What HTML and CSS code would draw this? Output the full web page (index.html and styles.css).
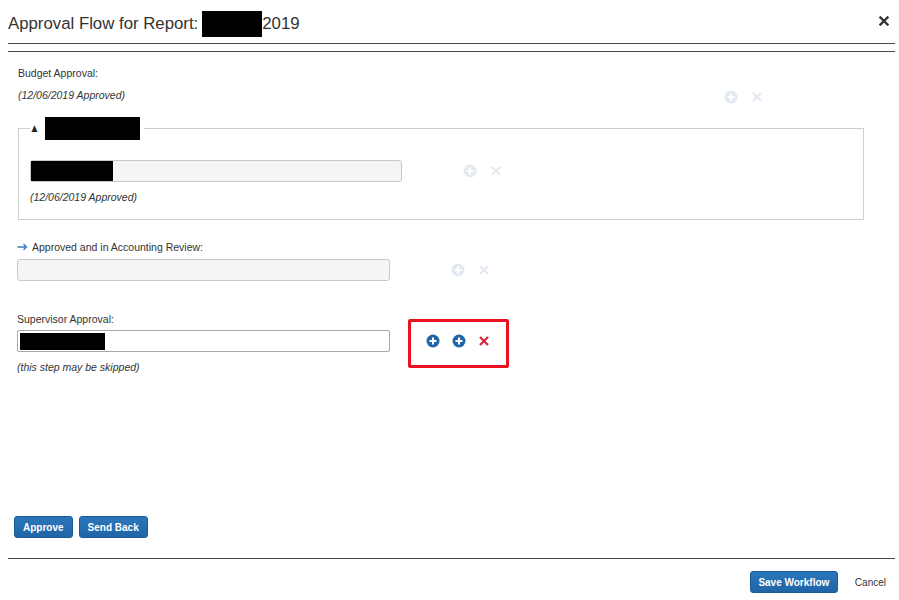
FILE: index.html
```html
<!DOCTYPE html>
<html>
<head>
<meta charset="utf-8">
<link rel="stylesheet" href="styles.css">
</head>
<body>
<div class="modal">
  <div class="header">
    <h1 class="title">Approval Flow for Report: <span class="redact redact-title"></span>2019</h1>
    <span class="close"><svg width="10" height="10" viewBox="0 0 10 10"><path d="M1.5 1.5 L8.5 8.5 M8.5 1.5 L1.5 8.5" stroke="#333" stroke-width="2.4" stroke-linecap="square"/></svg></span>
  </div>
  <div class="divider"></div>

  <div class="content">
    <div class="step step-budget">
      <div class="step-main budget-main">
        <div class="label">Budget Approval:</div>
        <div class="note">(12/06/2019 Approved)</div>
      </div>
      <div class="actions faded">
        <svg class="ic" width="14" height="14" viewBox="0 0 14 14"><circle cx="7" cy="7" r="6.5" fill="currentColor"/><path d="M3.5 7 H10.5 M7 3.5 V10.5" stroke="#fff" stroke-width="2"/></svg>
        <svg class="ic" width="12" height="12" viewBox="0 0 12 12"><path d="M2 2 L10 10 M10 2 L2 10" stroke="currentColor" stroke-width="2.2"/></svg>
      </div>
    </div>

    <fieldset class="group">
      <legend class="group-legend"><span class="tri">&#9650;</span><span class="redact redact-legend"></span></legend>
      <div class="step">
        <div class="step-main">
          <div class="field field-grey"><span class="redact redact-field"></span></div>
        </div>
        <div class="actions faded inner-actions">
          <svg class="ic" width="14" height="14" viewBox="0 0 14 14"><circle cx="7" cy="7" r="6.5" fill="currentColor"/><path d="M3.5 7 H10.5 M7 3.5 V10.5" stroke="#fff" stroke-width="2"/></svg>
          <svg class="ic" width="12" height="12" viewBox="0 0 12 12"><path d="M2 2 L10 10 M10 2 L2 10" stroke="currentColor" stroke-width="2.2"/></svg>
        </div>
      </div>
      <div class="note note-after">(12/06/2019 Approved)</div>
    </fieldset>

    <div class="label label-arrow"><svg class="arrow" width="11" height="8" viewBox="0 0 11 8"><path d="M0.5 4 H9.5 M6.5 1 L9.5 4 L6.5 7" fill="none" stroke="#3a7ac0" stroke-width="1.3"/></svg>Approved and in Accounting Review:</div>
    <div class="step">
      <div class="step-main">
        <div class="field field-grey field-wide"></div>
      </div>
      <div class="actions faded inner-actions">
        <svg class="ic" width="14" height="14" viewBox="0 0 14 14"><circle cx="7" cy="7" r="6.5" fill="currentColor"/><path d="M3.5 7 H10.5 M7 3.5 V10.5" stroke="#fff" stroke-width="2"/></svg>
        <svg class="ic" width="12" height="12" viewBox="0 0 12 12"><path d="M2 2 L10 10 M10 2 L2 10" stroke="currentColor" stroke-width="2.2"/></svg>
      </div>
    </div>

    <div class="step step-super">
      <div class="step-main">
        <div class="label">Supervisor Approval:</div>
        <div class="field field-white field-wide"><span class="redact redact-super"></span></div>
        <div class="note note-after">(this step may be skipped)</div>
      </div>
      <div class="actions highlight">
        <svg class="ic blue" width="14" height="14" viewBox="0 0 14 14"><circle cx="7" cy="7" r="6.5" fill="currentColor"/><path d="M3.5 7 H10.5 M7 3.5 V10.5" stroke="#fff" stroke-width="2"/></svg>
        <svg class="ic blue" width="14" height="14" viewBox="0 0 14 14"><circle cx="7" cy="7" r="6.5" fill="currentColor"/><path d="M3.5 7 H10.5 M7 3.5 V10.5" stroke="#fff" stroke-width="2"/></svg>
        <svg class="ic red" width="12" height="12" viewBox="0 0 12 12"><path d="M2 2 L10 10 M10 2 L2 10" stroke="currentColor" stroke-width="2.2"/></svg>
      </div>
    </div>
  </div>

  <div class="btn-row">
    <button class="btn">Approve</button>
    <button class="btn">Send Back</button>
  </div>

  <div class="footer">
    <button class="btn btn-save">Save Workflow</button>
    <span class="cancel">Cancel</span>
  </div>
</div>
</body>
</html>
```

FILE: styles.css
```css
html, body {
  margin: 0;
  padding: 0;
  background: #fff;
}
body {
  font-family: "Liberation Sans", Arial, sans-serif;
  color: #333;
  width: 899px;
  height: 600px;
  overflow: hidden;
}
.modal {
  display: flex;
  flex-direction: column;
}
.header {
  margin: 0 4px 0 8px;
  padding-top: 11px;
  height: 32px;
  border-bottom: 1px solid #4a4a4a;
  display: flex;
  justify-content: space-between;
  align-items: flex-start;
}
.title {
  margin: 0;
  font-weight: normal;
  font-size: 16.8px;
  line-height: 26px;
  color: #333;
  display: flex;
  align-items: center;
}
.redact {
  display: inline-block;
  background: #000;
}
.redact-title {
  width: 60px;
  height: 26px;
  margin-left: 4px;
}
.close {
  display: flex;
  margin-top: 5px;
  margin-right: 6px;
}
.divider {
  margin: 7px 4px 0 8px;
  border-top: 1px solid #4a4a4a;
}
.content {
  padding-left: 17px;
  display: flex;
  flex-direction: column;
}
.label {
  font-size: 10.5px;
  line-height: 14px;
  color: #333;
}
.note {
  font-size: 10.5px;
  line-height: 14px;
  font-style: italic;
  color: #333;
}
.step {
  display: flex;
  align-items: center;
}
.step-budget {
  margin-top: 14px;
  align-items: flex-end;
}
.budget-main {
  width: 707px;
  padding-left: 1px;
  box-sizing: border-box;
}
.step-budget .note {
  margin-top: 8px;
}
.step-budget .actions {
  margin-bottom: -2px;
}
.actions {
  display: flex;
  align-items: center;
  gap: 13px;
}
.faded {
  color: #e2e9f1;
}
.ic {
  display: block;
}
.blue { color: #1f66a8; }
.red { color: #d3263a; }

.group {
  margin: 15px 0 0 1px;
  width: 846px;
  box-sizing: border-box;
  border: 1px solid #cfcfcf;
  padding: 20px 11px 15px;
  min-width: 0;
}
.group-legend {
  padding: 0 4px 0 1px;
  margin-left: 0;
  display: flex;
  align-items: center;
}
.tri {
  font-size: 9px;
  color: #222;
  margin-right: 7px;
  line-height: 1;
  font-family: "DejaVu Sans", sans-serif;
  transform: scaleX(0.85);
}
.redact-legend {
  width: 95px;
  height: 23px;
}
.field {
  box-sizing: border-box;
  height: 22px;
  border: 1px solid #c8c8c8;
  border-radius: 3px;
  display: flex;
  align-items: center;
}
.field-grey {
  background: #f5f5f5;
  width: 372px;
}
.redact-field {
  width: 82px;
  height: 20px;
}
.inner-actions {
  margin-left: 61px;
}
.note-after {
  margin-top: 8px;
}
.field-wide {
  width: 373px;
}
.label-arrow {
  margin-top: 20px;
  margin-bottom: 5px;
  display: flex;
  align-items: center;
}
.arrow {
  display: block;
  margin-right: 4px;
}
.step-super {
  margin-top: 31px;
}
.step-super .label {
  margin-bottom: 4px;
}
.field-white {
  background: #fff;
  border-color: #a9a9a9;
  border-radius: 2px;
  padding-left: 2px;
}
.redact-super {
  width: 85px;
  height: 17px;
}
.highlight {
  margin-left: 18px;
  width: 101px;
  height: 49px;
  box-sizing: border-box;
  border: 3px solid #e8131f;
  border-radius: 2px;
  padding: 0 0 5px 15px;
  gap: 12px;
}
.btn-row {
  margin-top: 142px;
  padding-left: 14px;
  display: flex;
  gap: 6px;
}
.btn {
  font-family: "Liberation Sans", Arial, sans-serif;
  font-size: 10px;
  font-weight: bold;
  color: #fff;
  height: 22px;
  padding: 0 8px;
  border: 1px solid #1b5b98;
  border-radius: 3px;
  background: linear-gradient(#2b76ba, #1f65a6);
  cursor: pointer;
}
.footer {
  margin: 20px 4px 0 8px;
  border-top: 1px solid #4a4a4a;
  padding-top: 12px;
  display: flex;
  justify-content: flex-end;
  align-items: center;
  padding-right: 9px;
}
.btn-save {
  width: 88px;
  padding: 0;
}
.cancel {
  font-size: 10px;
  margin-left: 17px;
  color: #333;
}
```
